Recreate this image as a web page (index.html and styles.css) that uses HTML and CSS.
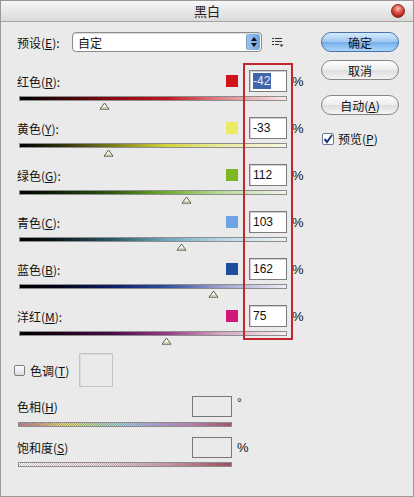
FILE: index.html
```html
<!DOCTYPE html>
<html>

<head>
  <title>黑白</title>
  <link rel="stylesheet" href="styles.css">
</head>

<body>
  <div class="window">
    <div class="titlebar">
      <span></span>
      <span class="title">黑白</span>
      <span class="close"></span>
    </div>

    <div class="content">
      <div class="main">
        <div class="preset">
          <span class="preset-label">预设(<u>E</u>):</span>
          <div class="select">
            <span class="select-text">自定</span>
            <span class="stepper">
              <svg width="8" height="12" viewBox="0 0 8 12">
                <polygon points="4,1 7,5 1,5" fill="#111" />
                <polygon points="1,7 7,7 4,11" fill="#111" />
              </svg>
            </span>
          </div>
          <svg class="menu-icon" width="12" height="10" viewBox="0 0 12 10">
            <rect x="0" y="0" width="2" height="1" fill="#333" />
            <rect x="3" y="0" width="7" height="1" fill="#333" />
            <rect x="0" y="3" width="2" height="1" fill="#333" />
            <rect x="3" y="3" width="7" height="1" fill="#333" />
            <rect x="0" y="6" width="2" height="1" fill="#333" />
            <rect x="3" y="6" width="4" height="1" fill="#333" />
            <polygon points="7.5,6.5 11.5,6.5 9.5,9" fill="#333" />
          </svg>
        </div>

        <!-- colour channels -->
        <div class="channel red">
          <div class="channel-head">
            <span class="label">红色(<u>R</u>):</span>
            <span class="swatch"></span>
            <span class="field"><span class="selected">-42</span></span>
            <span class="unit">%</span>
          </div>
          <div class="track"><span class="thumb" style="left: 85px"></span></div>
        </div>

        <div class="channel yellow">
          <div class="channel-head">
            <span class="label">黄色(<u>Y</u>):</span>
            <span class="swatch"></span>
            <span class="field">-33</span>
            <span class="unit">%</span>
          </div>
          <div class="track"><span class="thumb" style="left: 89px"></span></div>
        </div>

        <div class="channel green">
          <div class="channel-head">
            <span class="label">绿色(<u>G</u>):</span>
            <span class="swatch"></span>
            <span class="field">112</span>
            <span class="unit">%</span>
          </div>
          <div class="track"><span class="thumb" style="left: 167px"></span></div>
        </div>

        <div class="channel cyan">
          <div class="channel-head">
            <span class="label">青色(<u>C</u>):</span>
            <span class="swatch"></span>
            <span class="field">103</span>
            <span class="unit">%</span>
          </div>
          <div class="track"><span class="thumb" style="left: 162px"></span></div>
        </div>

        <div class="channel blue">
          <div class="channel-head">
            <span class="label">蓝色(<u>B</u>):</span>
            <span class="swatch"></span>
            <span class="field">162</span>
            <span class="unit">%</span>
          </div>
          <div class="track"><span class="thumb" style="left: 194px"></span></div>
        </div>

        <div class="channel magenta">
          <div class="channel-head">
            <span class="label">洋红(<u>M</u>):</span>
            <span class="swatch"></span>
            <span class="field">75</span>
            <span class="unit">%</span>
          </div>
          <div class="track"><span class="thumb" style="left: 147px"></span></div>
        </div>

        <!-- tint -->
        <div class="tint">
          <span class="checkbox"></span>
          <span class="tint-label">色调(<u>T</u>)</span>
          <span class="tint-box"></span>
        </div>

        <div class="tone hue">
          <div class="tone-head">
            <span class="label">色相(<u>H</u>)</span>
            <span class="field disabled"></span>
            <span class="unit deg">°</span>
          </div>
          <div class="tone-track"></div>
        </div>

        <div class="tone sat">
          <div class="tone-head">
            <span class="label">饱和度(<u>S</u>)</span>
            <span class="field disabled"></span>
            <span class="unit">%</span>
          </div>
          <div class="tone-track"></div>
        </div>
      </div>

      <div class="side">
        <div class="btn primary">确定</div>
        <div class="btn cancel">取消</div>
        <div class="btn auto">自动(<u>A</u>)</div>
        <div class="preview">
          <span class="checkbox checked">
            <svg width="10" height="10" viewBox="0 0 10 10">
              <polyline points="1.5,5 4,8 9,1" fill="none" stroke="#1b3a7a" stroke-width="2" />
            </svg>
          </span>
          <span>预览(<u>P</u>)</span>
        </div>
      </div>
    </div>

    <div class="mark"></div>
  </div>
</body>

</html>
```

FILE: styles.css
```css
body {
  margin: 0;
  font-family: "Noto Sans CJK SC", "Liberation Sans", sans-serif;
  font-size: 12px;
  color: #111;
}

u {
  text-decoration: underline;
  text-underline-offset: 1px;
}

.window {
  position: relative;
  width: 414px;
  height: 497px;
  box-sizing: border-box;
  border: 1px solid #9a9a9a;
  background: #eaeaea;
}

/* title bar */
.titlebar {
  display: grid;
  grid-template-columns: 1fr auto 1fr;
  align-items: center;
  height: 20px;
  border-bottom: 1px solid #a4a4a4;
  background: linear-gradient(#f6f6f6, #dadada);
}
.title {
  font-size: 13px;
  line-height: 20px;
  color: #222;
}
.close {
  justify-self: end;
  width: 14px;
  height: 14px;
  margin-right: 8px;
  border-radius: 50%;
  box-sizing: border-box;
  border: 1px solid #8a2a24;
  background: radial-gradient(circle at 50% 30%, #fbc2b8 0, #e0554a 40%, #b41e18 75%, #8c1410 100%);
}

.content {
  display: flex;
  gap: 17px;
  padding: 10px 0 0 16px;
}

.main {
  width: 287px;
}

/* preset row */
.preset {
  display: flex;
  align-items: center;
  height: 20px;
}
.preset-label {
  width: 55px;
}
.select {
  display: flex;
  align-items: center;
  justify-content: space-between;
  width: 190px;
  height: 20px;
  box-sizing: border-box;
  border: 1px solid #8c8c8c;
  border-radius: 4px;
  background: #fff;
  box-shadow: inset 0 1px 1px rgba(0, 0, 0, 0.15);
}
.select-text {
  padding-left: 5px;
}
.stepper {
  display: flex;
  align-items: center;
  justify-content: center;
  width: 13px;
  height: 16px;
  margin-right: 1px;
  border-radius: 2px 3px 3px 2px;
  background: linear-gradient(90deg, #9cc4ee, #6ea2dc);
  border-left: 1px solid #7a9cc4;
}
.menu-icon {
  margin-left: 10px;
  margin-top: 2px;
}

/* channels */
.channel {
  height: 47px;
}
.channel.red {
  margin-top: 18px;
}
.channel-head,
.tone-head {
  display: flex;
  align-items: center;
  height: 22px;
}
.label {
  flex: 1;
}
.swatch {
  width: 12px;
  height: 12px;
  margin-right: 11px;
}
.field {
  width: 38px;
  height: 22px;
  box-sizing: border-box;
  border: 1px solid #7c7c7c;
  background: #fff;
  padding: 2px 3px;
  font-family: "Liberation Sans", sans-serif;
  font-size: 12px;
  line-height: 16px;
  box-shadow: inset 1px 1px 0 #d0d0d0;
}
.selected {
  display: inline-block;
  background: #3f66ac;
  color: #e8ecf4;
  padding-right: 1px;
}
.unit {
  width: 12px;
  padding-left: 5px;
  font-family: "Liberation Sans", sans-serif;
  font-size: 13px;
}

.track {
  position: relative;
  height: 5px;
  margin: 4px 17px 0 2px;
  box-sizing: border-box;
  border: 1px solid #8e8e8e;
}
.thumb {
  position: absolute;
  top: 5px;
  width: 11px;
  height: 8px;
  margin-left: -6px;
  background: url("data:image/svg+xml,%3Csvg xmlns='http://www.w3.org/2000/svg' width='11' height='8' viewBox='0 0 11 8'%3E%3Cpolygon points='1,7.2 5.5,1 10,7.2' fill='%23fafcf6' stroke='%23566248' stroke-width='1'/%3E%3Cpolygon points='2.2,6.7 8.8,6.7 7.8,5.2 3.2,5.2' fill='%23b8c8a0'/%3E%3C/svg%3E") no-repeat;
}

.red .swatch { background: #d2141c; }
.yellow .swatch { background: #e9ec62; }
.green .swatch { background: #7db823; }
.cyan .swatch { background: #6ea3e6; }
.blue .swatch { background: #1f4d9e; }
.magenta .swatch { background: #cf1878; }

.red .track {
  background: linear-gradient(90deg, #000, #3a0608 15%, #8a0a12 35%, #c4151f 55%, #e2808a 75%, #f7eaea);
}
.yellow .track {
  background: linear-gradient(90deg, #000, #2c2c08 15%, #7c7c1c 35%, #d2d43c 55%, #eaea9a 75%, #f6f6e6);
}
.green .track {
  background: linear-gradient(90deg, #000, #0e2408 15%, #2e5a12 35%, #6eae2c 55%, #b6da94 75%, #eff5ea);
}
.cyan .track {
  background: linear-gradient(90deg, #000, #0c1c20 15%, #2c5a68 35%, #6ea6bc 55%, #b4d4e2 75%, #eef4f7);
}
.blue .track {
  background: linear-gradient(90deg, #000, #040418 15%, #0e1e6a 35%, #2e4e9e 55%, #9aa0cc 75%, #efeff7);
}
.magenta .track {
  background: linear-gradient(90deg, #000, #1c0016 15%, #4c0a4c 35%, #983a86 55%, #d2a4c2 75%, #f7eff3);
}

/* tint */
.tint {
  display: flex;
  align-items: center;
  margin-top: 1px;
  height: 34px;
}
.checkbox {
  display: inline-flex;
  align-items: center;
  justify-content: center;
  width: 11px;
  height: 11px;
  box-sizing: border-box;
  border: 1px solid #7e7e7e;
  border-radius: 2px;
  background: linear-gradient(#ffffff, #dcdcdc);
}
.tint .checkbox {
  margin-left: -3px;
}
.tint-label {
  margin-left: 5px;
  width: 49px;
}
.tint-box {
  width: 34px;
  height: 34px;
  box-sizing: border-box;
  border: 1px solid #c4c4c4;
  box-shadow: inset 1px 1px 0 #d8d8d8;
}

.tone {
  width: 233px;
}
.hue {
  margin-top: 9px;
}
.sat {
  margin-top: 10px;
}
.tone-head {
  height: 21px;
}
.field.disabled {
  width: 40px;
  height: 21px;
  background: #eaeaea;
  border-color: #777;
  box-shadow: none;
}
.tone .unit {
  width: 13px;
  align-self: flex-start;
  line-height: 14px;
}
.tone .unit.deg {
  font-size: 12px;
}
.sat .unit {
  align-self: center;
}
.tone-track {
  height: 5px;
  margin: 5px 1px 0 1px;
  width: 214px;
  box-sizing: border-box;
  border: 1px solid #8c8c8c;
}
.sat .tone-track {
  margin-top: 4px;
}
.hue .tone-track {
  background:
    repeating-conic-gradient(rgba(90, 60, 80, 0.35) 0 25%, transparent 0 50%) 0 0 / 2px 2px,
    linear-gradient(90deg, #c88296, #e6e070 22%, #b4e0a4 36%, #a6d8ea 50%, #b2aae2 65%, #c690c4 80%, #b05a70);
}
.sat .tone-track {
  background:
    repeating-conic-gradient(rgba(90, 50, 60, 0.3) 0 25%, transparent 0 50%) 0 0 / 2px 2px,
    linear-gradient(90deg, #ffffff, #f4e6e8 35%, #d6a8b0 70%, #a85466);
}

/* buttons */
.side {
  display: flex;
  flex-direction: column;
  width: 78px;
}
.btn {
  display: flex;
  align-items: center;
  justify-content: center;
  height: 20px;
  box-sizing: border-box;
  border: 1px solid #858585;
  border-radius: 10px;
  background: linear-gradient(#fdfdfd, #ececec 50%, #dedede 52%, #f4f4f4);
  font-size: 12px;
}
.btn.primary {
  border-color: #4a72a8;
  background: linear-gradient(#d6eafc, #9ec8f2 48%, #76aeea 52%, #aad6fb);
}
.btn.cancel {
  margin-top: 8px;
}
.btn.auto {
  margin-top: 15px;
}
.preview {
  display: flex;
  align-items: center;
  gap: 4px;
  margin-top: 15px;
  margin-left: 1px;
}
.checkbox.checked {
  width: 12px;
  height: 12px;
  border-color: #6a7a96;
  background: #fff;
}

/* annotation box */
.mark {
  position: absolute;
  left: 242px;
  top: 62px;
  width: 50px;
  height: 277px;
  box-sizing: border-box;
  border: 2px solid #c4262e;
}
```
